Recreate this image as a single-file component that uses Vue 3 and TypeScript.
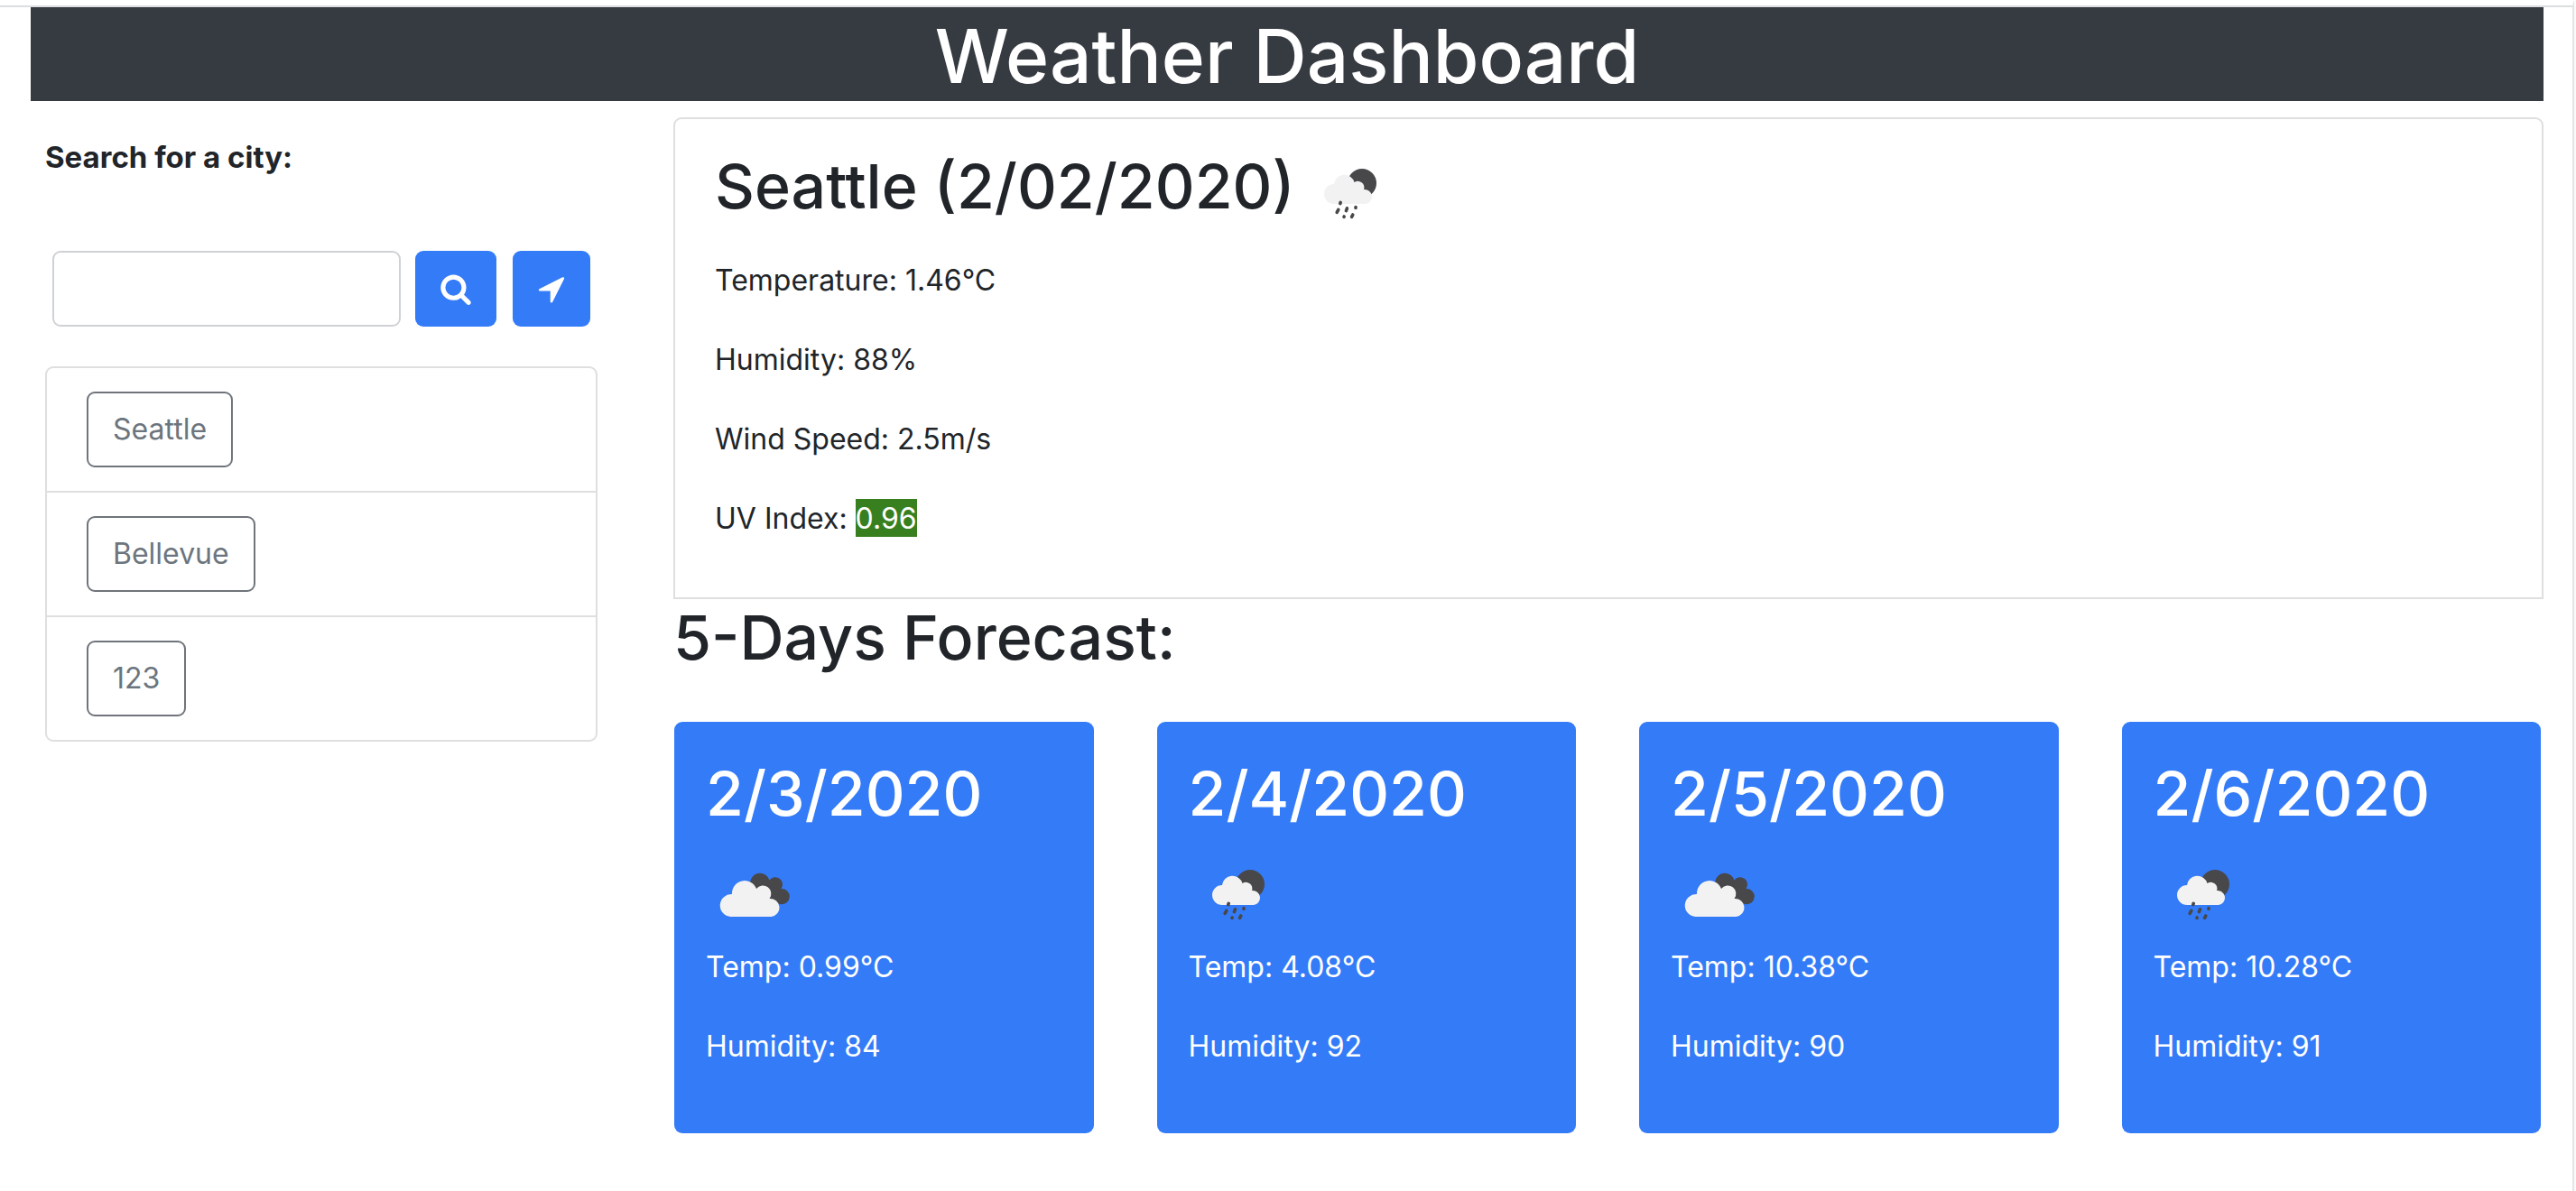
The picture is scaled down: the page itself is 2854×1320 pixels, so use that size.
<script setup lang="ts">
import { h, ref } from 'vue'
import type { FunctionalComponent } from 'vue'

type Sky = 'rain' | 'clouds'

interface Day {
  date: string
  sky: Sky
  temp: string
  humidity: number
}

const query = ref('')
const cities = ['Seattle', 'Bellevue', '123']

const days: Day[] = [
  { date: '2/3/2020', sky: 'clouds', temp: '0.99', humidity: 84 },
  { date: '2/4/2020', sky: 'rain', temp: '4.08', humidity: 92 },
  { date: '2/5/2020', sky: 'clouds', temp: '10.38', humidity: 90 },
  { date: '2/6/2020', sky: 'rain', temp: '10.28', humidity: 91 },
]

const dark = '#48484a'
const light = '#f2f2f2'

// Weather glyphs share a 100 x 100 drawing area.
const SkyIcon: FunctionalComponent<{ sky: Sky }> = (props) =>
  h(
    'svg',
    { viewBox: '0 0 100 100', width: 100, height: 100, role: 'img', 'aria-label': props.sky },
    props.sky === 'rain'
      ? [
          h('circle', { cx: 68, cy: 39, r: 16, fill: dark }),
          h('path', {
            fill: light,
            d: 'M37 62a11 11 0 0 1 0-22a11.5 11.5 0 0 1 22.5-2a7 7 0 0 1 10.5 8a8 8 0 0 1 2 16z',
          }),
          h('path', {
            stroke: dark,
            'stroke-width': 3.6,
            'stroke-linecap': 'round',
            fill: 'none',
            d: 'M44.2 60.4l-.4 1.2M41.8 68.4l-1.6 3M51.4 66.8l-1 2.8M48.2 76l-.2.4M57.8 74l-1.2 2.4M61 65.6v.8',
          }),
        ]
      : [
          h('path', {
            fill: dark,
            d: 'M49 37a11 11 0 0 1 21.5-2.5a7.5 7.5 0 0 1 13 9.5a8.6 8.6 0 1 1-1 17l-14-3z',
          }),
          h('path', {
            fill: light,
            d: 'M27.5 75a12.5 12.5 0 0 1 1.5-25a14 14 0 0 1 27-6a9 9 0 0 1 14.5 11a10 10 0 0 1 2 20z',
          }),
        ],
  )
SkyIcon.props = ['sky']
</script>

<template>
  <div class="page">
    <header class="banner"><h1>Weather Dashboard</h1></header>
    <div class="columns">
      <aside class="sidebar">
        <label class="search-label" for="city">Search for a city:</label>
        <form class="search" @submit.prevent>
          <input id="city" v-model="query" type="text" />
          <button class="primary search-btn" type="submit" aria-label="Search">
            <svg viewBox="0 0 1792 1792" width="36" height="36" fill="currentColor">
              <path d="M1216 832q0-185-131.500-316.500t-316.500-131.500-316.500 131.500-131.500 316.500 131.500 316.500 316.500 131.500 316.500-131.500 131.500-316.500zm512 832q0 52-38 90t-90 38q-54 0-90-38l-343-342q-179 124-399 124-143 0-273.500-55.500t-225-150-150-225-55.500-273.500 55.500-273.500 150-225 225-150 273.500-55.500 273.500 55.500 225 150 150 225 55.500 273.500q0 220-124 399l343 343q37 37 37 90z" />
            </svg>
          </button>
          <button class="primary locate-btn" type="button" aria-label="Use my location">
            <svg viewBox="0 0 1792 1792" width="36" height="36" fill="currentColor">
              <path d="M1593 349l-640 1280q-17 35-57 35-5 0-15-2-22-5-35.500-22.500t-13.500-39.500v-576h-576q-22 0-39.500-13.500t-22.500-35.500 4-42 29-30l1280-640q13-7 29-7 27 0 45 19 15 14 18.500 34.500t-6.500 39.500z" />
            </svg>
          </button>
        </form>
        <ul class="history">
          <li v-for="city in cities" :key="city">
            <button class="outline" type="button">{{ city }}</button>
          </li>
        </ul>
      </aside>

      <main>
        <section class="current">
          <div class="heading">
            <h2>Seattle (2/02/2020)</h2>
            <SkyIcon sky="rain" />
          </div>
          <div class="facts">
            <p>Temperature: 1.46°C</p>
            <p>Humidity: 88%</p>
            <p>Wind Speed: 2.5m/s</p>
            <p>UV Index: <span class="uv">0.96</span></p>
          </div>
        </section>
        <h2>5-Days Forecast:</h2>
        <section class="forecast">
          <article v-for="day in days" :key="day.date" class="day">
            <h2>{{ day.date }}</h2>
            <SkyIcon :sky="day.sky" class="day-icon" />
            <div class="facts">
              <p>Temp: {{ day.temp }}°C</p>
              <p>Humidity: {{ day.humidity }}</p>
            </div>
          </article>
        </section>
      </main>
    </div>
  </div>
</template>

<style>
body {
  background: #fafafa;
}
</style>

<style scoped>
.page {
  box-sizing: border-box;
  min-height: 100vh;
  margin-right: 2px;
  padding: 0 32px 32px 34px;
  border-top: 6px solid #fff;
  border-right: 2px solid #e4e4e5;
  background: linear-gradient(#dcdee0, #dcdee0) 0 0 / 100% 2px no-repeat #fff;
  color: #212529;
  font: 32px/54px Inter, 'Liberation Sans', sans-serif;
}

h1,
h2,
p,
ul {
  margin: 0;
  padding: 0;
}

h1 {
  font-size: 82px;
  font-weight: 500;
  line-height: 98px;
}

h2 {
  font-size: 68px;
  font-weight: 500;
  line-height: 84px;
  white-space: nowrap;
}

svg {
  display: block;
  flex: none;
}

.banner {
  margin-top: 2px;
  padding-top: 6px;
  background: #363a41;
  color: #fff;
  text-align: center;
}

.columns {
  display: grid;
  grid-template-columns: minmax(0, 153fr) minmax(0, 518fr);
  gap: 84px;
  align-items: start;
  padding: 18px 0 0 16px;
}

.sidebar {
  padding-top: 17px;
}

.search-label {
  display: block;
  font-size: 33px;
  font-weight: 700;
}

.search {
  display: flex;
  margin: 77px 8px 44px;
}

input {
  box-sizing: border-box;
  flex: 1;
  min-width: 0;
  height: 84px;
  padding: 0 24px;
  border: 2px solid #ced2d6;
  border-radius: 9px;
  background: #fff;
  color: inherit;
  font: inherit;
}

button {
  box-sizing: border-box;
  height: 84px;
  border-radius: 9px;
  font: inherit;
  cursor: pointer;
}

.primary {
  display: flex;
  flex: none;
  align-items: center;
  justify-content: center;
  padding: 0;
  border: 0;
  background: #347bf8;
  color: #fff;
}

.search-btn {
  width: 90px;
  margin: 0 18px 0 16px;
}

.locate-btn {
  width: 86px;
}

.history {
  border: 2px solid #dfdfdf;
  border-radius: 9px;
  list-style: none;
}

.history li {
  display: flex;
  padding: 26px 44px;
}

.history li + li {
  border-top: 2px solid #dfdfdf;
}

.outline {
  padding: 0 27px;
  border: 2px solid #70757b;
  background: none;
  color: #6c757d;
}

.current {
  padding: 32px 44px 60px;
  border: 2px solid #dfdfdf;
  border-radius: 9px 9px 0 0;
}

.heading {
  display: flex;
  gap: 6px;
  margin-bottom: 20px;
}

.facts {
  display: grid;
  gap: 34px;
}

.uv {
  padding: 2px 0 1px;
  background: #38801f;
  color: #fff;
}

.forecast {
  display: grid;
  grid-template-columns: repeat(4, minmax(0, 1fr));
  gap: 70px;
  margin: 52px 3px 0 1px;
}

.day {
  padding: 37px 35px 69px;
  border-radius: 9px;
  background: #347bf8;
  color: #fff;
}

.day-icon {
  margin: 20px 0 4px;
}
</style>
